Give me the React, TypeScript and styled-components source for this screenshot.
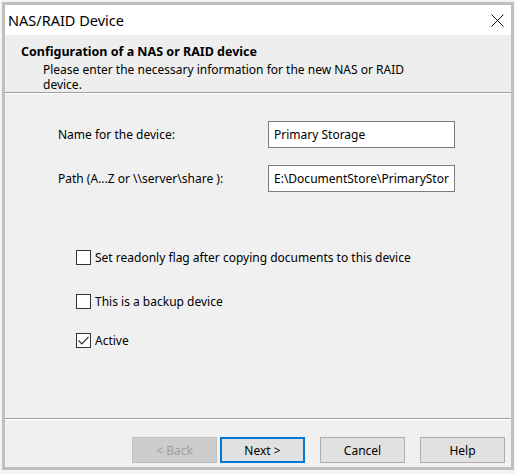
import React from "react";
import styled, { createGlobalStyle } from "styled-components";

const GlobalStyle = createGlobalStyle`
  html, body {
    margin: 0;
    padding: 0;
    background: #f4f4f4;
  }
  body {
    font-family: "Noto Sans", "Open Sans", "Liberation Sans", sans-serif;
    font-size: 12px;
    color: #000;
  }
`;

const Window = styled.div`
  box-sizing: border-box;
  width: 512px;
  height: 468px;
  margin: 2px 0 0 2px;
  border: 3px solid #bfbfbf;
  background: #f0f0f0;
  display: flex;
  flex-direction: column;
`;

const TitleBar = styled.div`
  height: 30px;
  background: #fff;
  display: flex;
  align-items: center;
  justify-content: space-between;
  padding: 0 7px 0 3px;
  font-size: 14.5px;
  color: #000;
`;

const CloseIcon = () => (
  <svg width="13" height="13" viewBox="0 0 13 13">
    <path d="M0.5 0.5 L12.5 12.5 M12.5 0.5 L0.5 12.5" stroke="#111" strokeWidth="1" fill="none" />
  </svg>
);

const Header = styled.div`
  height: 58px;
  box-sizing: border-box;
  background: #eeeeee;
  padding: 9px 0 0 16px;
  border-bottom: 1px solid #a0a0a0;
  box-shadow: 0 1px 0 #fff;
  h1 {
    margin: 0;
    font-size: 12.5px;
    font-weight: bold;
    line-height: 15px;
  }
  p {
    margin: 3px 0 0 22px;
    width: 380px;
    line-height: 15px;
  }
`;

const Body = styled.div`
  flex: 1;
  padding: 28px 0 0 53px;
`;

const Form = styled.div`
  display: grid;
  grid-template-columns: 210px 187px;
  row-gap: 17px;
  align-items: center;
`;

const Field = styled.input`
  box-sizing: border-box;
  height: 27px;
  width: 187px;
  border: 1px solid #7a7a7a;
  background: #fff;
  padding: 0 5px;
  font: inherit;
  font-size: 12px;
  color: #000;
  outline: none;
`;

const CheckList = styled.div`
  display: flex;
  flex-direction: column;
  padding-left: 18px;
  margin-top: 57px;
`;

const CheckRow = styled.label<{ $gap: number }>`
  display: flex;
  align-items: center;
  gap: 4px;
  height: 16px;
  margin-top: ${(p) => p.$gap}px;
`;

const Box = styled.span`
  box-sizing: border-box;
  width: 15px;
  height: 15px;
  border: 1px solid #333;
  background: #fff;
  display: flex;
  align-items: center;
  justify-content: center;
`;

const Footer = styled.div`
  border-top: 1px solid #a0a0a0;
  box-shadow: inset 0 1px 0 #fff;
  padding: 18px 6px 4px 0;
  display: flex;
  justify-content: flex-end;
`;

const Button = styled.button<{ $primary?: boolean; $space?: number }>`
  box-sizing: border-box;
  width: 85px;
  height: 26px;
  margin-left: ${(p) => p.$space ?? 15}px;
  background: #e1e1e1;
  border: ${(p) => (p.$primary ? "2px solid #0078d7" : "1px solid #adadad")};
  font: inherit;
  font-size: 12px;
  color: #000;
  padding: 0;
  &:disabled {
    background: #cccccc;
    border-color: #bfbfbf;
    color: #a0a0a0;
  }
`;

const Check = ({ checked, label, gap }: { checked?: boolean; label: string; gap: number }) => (
  <CheckRow $gap={gap}>
    <Box>
      {checked && (
        <svg width="11" height="9" viewBox="0 0 11 9">
          <path d="M0.5 4.5 L3.8 7.8 L10.5 1" stroke="#333" strokeWidth="1.2" fill="none" />
        </svg>
      )}
    </Box>
    {label}
  </CheckRow>
);

export default function App() {
  return (
    <>
      <GlobalStyle />
      <Window>
        <TitleBar>
          <span>NAS/RAID Device</span>
          <CloseIcon />
        </TitleBar>
        <Header>
          <h1>Configuration of a NAS or RAID device</h1>
          <p>Please enter the necessary information for the new NAS or RAID device.</p>
        </Header>
        <Body>
          <Form>
            <span>Name for the device:</span>
            <Field defaultValue="Primary Storage" />
            <span>Path (A...Z or \\server\share ):</span>
            <Field defaultValue="E:\DocumentStore\PrimaryStorage" />
          </Form>
          <CheckList>
            <Check gap={0} label="Set readonly flag after copying documents to this device" />
            <Check gap={28} label="This is a backup device" />
            <Check gap={23} checked label="Active" />
          </CheckList>
        </Body>
        <Footer>
          <Button disabled $space={0}>&lt; Back</Button>
          <Button $primary $space={3}>Next &gt;</Button>
          <Button>Cancel</Button>
          <Button>Help</Button>
        </Footer>
      </Window>
    </>
  );
}
